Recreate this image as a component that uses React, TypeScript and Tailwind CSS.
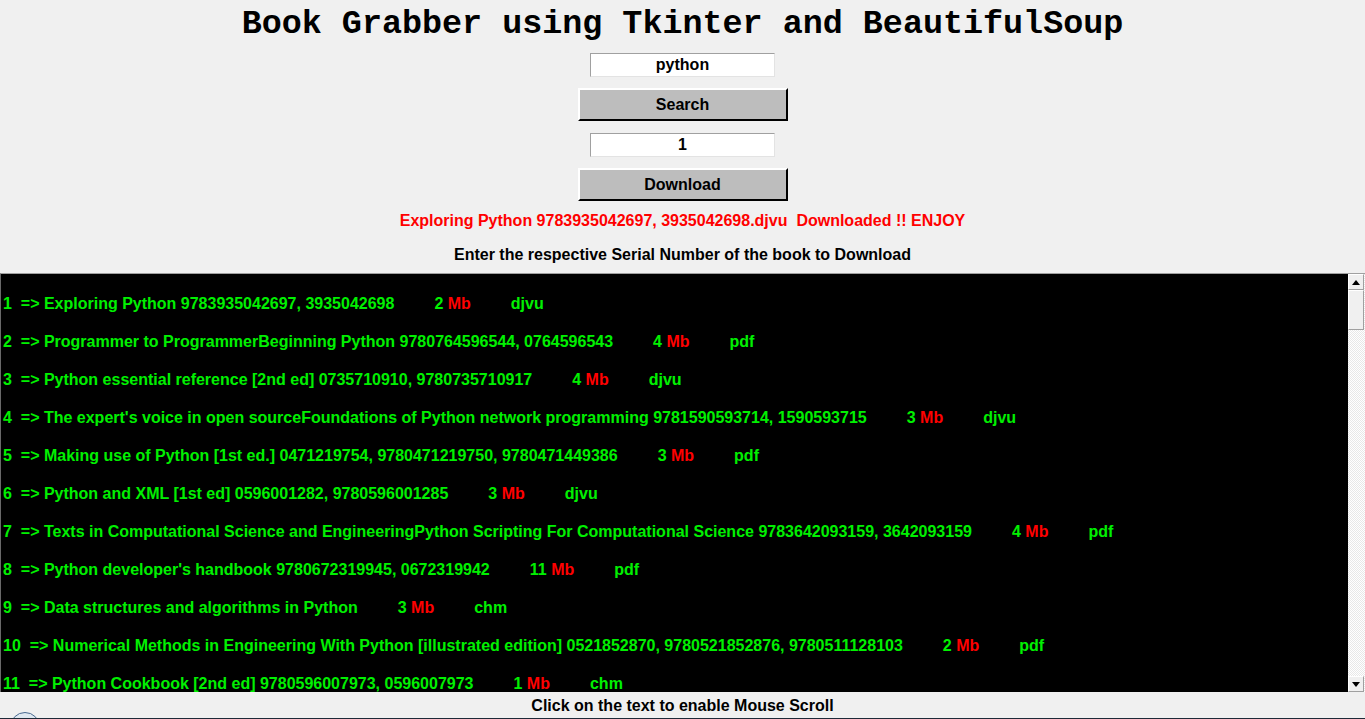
import React from 'react';

type Book = {
  title: string;
  size: string;
  ext: string;
};

const books: Book[] = [
  { title: 'Exploring Python 9783935042697, 3935042698', size: '2', ext: 'djvu' },
  { title: 'Programmer to ProgrammerBeginning Python 9780764596544, 0764596543', size: '4', ext: 'pdf' },
  { title: 'Python essential reference [2nd ed] 0735710910, 9780735710917', size: '4', ext: 'djvu' },
  { title: "The expert's voice in open sourceFoundations of Python network programming 9781590593714, 1590593715", size: '3', ext: 'djvu' },
  { title: 'Making use of Python [1st ed.] 0471219754, 9780471219750, 9780471449386', size: '3', ext: 'pdf' },
  { title: 'Python and XML [1st ed] 0596001282, 9780596001285', size: '3', ext: 'djvu' },
  { title: 'Texts in Computational Science and EngineeringPython Scripting For Computational Science 9783642093159, 3642093159', size: '4', ext: 'pdf' },
  { title: "Python developer's handbook 9780672319945, 0672319942", size: '11', ext: 'pdf' },
  { title: 'Data structures and algorithms in Python', size: '3', ext: 'chm' },
  { title: 'Numerical Methods in Engineering With Python [illustrated edition] 0521852870, 9780521852876, 9780511128103', size: '2', ext: 'pdf' },
  { title: 'Python Cookbook [2nd ed] 9780596007973, 0596007973', size: '1', ext: 'chm' },
];

const Entry: React.FC<{ value: string }> = ({ value }) => (
  <div className="w-[185px] h-[24px] bg-white border border-t-[#a0a0a0] border-l-[#a0a0a0] border-r-[#e3e3e3] border-b-[#e3e3e3] flex items-center justify-center text-[16px] font-bold text-black leading-none">
    {value}
  </div>
);

const TkButton: React.FC<{ label: string }> = ({ label }) => (
  <div className="w-[210px] h-[33px] bg-[#bdbdbd] border-t-2 border-l-2 border-t-white border-l-white border-b-2 border-r-2 border-b-black border-r-black flex items-center justify-center text-[16px] font-bold text-black">
    {label}
  </div>
);

const ArrowBox: React.FC<{ up?: boolean }> = ({ up }) => (
  <div className="w-[16px] h-[16px] bg-[#f0f0f0] border border-t-white border-l-white border-r-[#a0a0a0] border-b-[#a0a0a0] flex items-center justify-center">
    <svg width="8" height="5" viewBox="0 0 8 5">
      {up ? <polygon points="0,5 8,5 4,0" fill="#000" /> : <polygon points="0,0 8,0 4,5" fill="#000" />}
    </svg>
  </div>
);

export default function App() {
  return (
    <div
      className="w-[1365px] h-[719px] bg-[#f0f0f0] overflow-hidden flex flex-col items-center relative"
      style={{ fontFamily: '"Liberation Sans", Arial, sans-serif' }}
    >
      <h1
        className="mt-[4px] h-[40px] leading-[40px] text-[33.4px] font-bold text-black whitespace-pre"
        style={{ fontFamily: '"Liberation Mono", "Courier New", monospace' }}
      >
        Book Grabber using Tkinter and BeautifulSoup
      </h1>

      <div className="mt-[9px]">
        <Entry value="python" />
      </div>
      <div className="mt-[11px]">
        <TkButton label="Search" />
      </div>
      <div className="mt-[12px]">
        <Entry value="1" />
      </div>
      <div className="mt-[11px]">
        <TkButton label="Download" />
      </div>

      <p className="mt-[10px] h-[20px] leading-[20px] text-[16px] font-bold text-[#ff0000] whitespace-pre">
        Exploring Python 9783935042697, 3935042698.djvu  Downloaded !! ENJOY
      </p>
      <p className="mt-[14px] h-[20px] leading-[20px] text-[16px] font-bold text-black">
        Enter the respective Serial Number of the book to Download
      </p>

      <div className="mt-[8px] w-full h-[419px] flex">
        <div className="flex-1 bg-black border-t border-l border-t-[#a0a0a0] border-l-[#696969] overflow-hidden pt-[11px]">
          {books.map((b, i) => (
            <div key={i} className="h-[38px] flex items-center pl-[2px] text-[16px] font-bold text-[#00f000] whitespace-pre">
              <span>{`${i + 1}  => ${b.title}`}</span>
              <span className="ml-[40px]">{b.size} </span>
              <span className="text-[#ff0000]">Mb</span>
              <span className="ml-[40px]">{b.ext}</span>
            </div>
          ))}
        </div>
        <div className="w-[17px] flex flex-col border-t border-t-[#a0a0a0] bg-[repeating-conic-gradient(#ffffff_0%_25%,#e8e8e8_0%_50%)] bg-[length:2px_2px]">
          <ArrowBox up />
          <div className="w-[16px] h-[40px] bg-[#f0f0f0] border border-t-white border-l-white border-r-[#a0a0a0] border-b-[#a0a0a0]" />
          <div className="flex-1" />
          <ArrowBox />
        </div>
      </div>

      <p className="mt-[4px] h-[20px] leading-[20px] text-[16px] font-bold text-black">
        Click on the text to enable Mouse Scroll
      </p>

      <div className="absolute left-[10px] top-[712px] w-[30px] h-[30px] rounded-full border border-[#4a6a90] bg-[#dfe8f0]" />
      <div className="absolute left-0 bottom-0 w-full h-[1px] bg-[#1e2a38]" />
    </div>
  );
}
